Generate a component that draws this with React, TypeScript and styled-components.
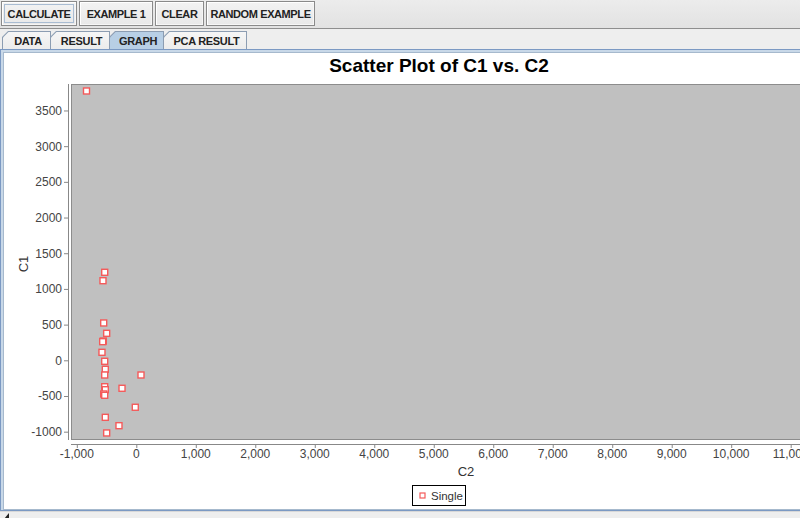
import React from 'react';
import styled, { createGlobalStyle } from 'styled-components';

const GlobalStyle = createGlobalStyle`
  html, body {
    margin: 0;
    padding: 0;
    background: #eeeeee;
    overflow: hidden;
  }
  body {
    font-family: "Liberation Sans", Arial, sans-serif;
  }
`;

const BUTTONS = [
  { label: 'CALCULATE', width: 76, focused: true },
  { label: 'EXAMPLE 1', width: 74, focused: false },
  { label: 'CLEAR', width: 49, focused: false },
  { label: 'RANDOM EXAMPLE', width: 109, focused: false },
];

const TABS = [
  { label: 'DATA', width: 49 },
  { label: 'RESULT', width: 60 },
  { label: 'GRAPH', width: 55 },
  { label: 'PCA RESULT', width: 84 },
];

const SELECTED_TAB = 'GRAPH';

// C2 (x) vs C1 (y)
const POINTS: [number, number][] = [
  [-837, 3773],
  [-531, 1233],
  [-560, 1115],
  [-548, 523],
  [-498, 378],
  [-555, 270],
  [-565, 261],
  [-577, 112],
  [-531, -14],
  [-521, -126],
  [-531, -206],
  [79, -206],
  [-531, -370],
  [-521, -412],
  [-240, -392],
  [-548, -472],
  [-531, -490],
  [-17, -658],
  [-521, -799],
  [-291, -916],
  [-498, -1018],
];

const X_TICKS = Array.from({ length: 13 }, (_, i) => -1000 + i * 1000);
const Y_TICKS = Array.from({ length: 10 }, (_, i) => -1000 + i * 500);

const sx = (v: number) => 135.3 + v * 0.05949;
const sy = (v: number) => 360.3 - v * 0.07138;

const fmt = (v: number) => v.toLocaleString('en-US');

const FONT = 'Liberation Sans, Arial, sans-serif';

function ScatterChart() {
  return (
    <ChartSvg viewBox="3 53 797 456" width={797} height={456}>
      <text x={438} y={72} textAnchor="middle" fontFamily={FONT} fontWeight={700} fontSize={19} fill="#000">
        Scatter Plot of C1 vs. C2
      </text>

      <rect x={70.5} y={84.5} width={760} height={355} fill="#c0c0c0" stroke="#8c8c8c" />

      {/* y axis */}
      <line x1={67.5} y1={84} x2={67.5} y2={440} stroke="#888" />
      {Y_TICKS.map((t) => (
        <g key={t}>
          <line x1={63} y1={sy(t) + 0.5} x2={67} y2={sy(t) + 0.5} stroke="#888" />
          <text x={61} y={sy(t) + 4.5} textAnchor="end" fontSize={12} fill="#444" fontFamily={FONT}>
            {t}
          </text>
        </g>
      ))}

      {/* x axis */}
      <line x1={70} y1={444.5} x2={810} y2={444.5} stroke="#888" />
      {X_TICKS.map((t) => (
        <g key={t}>
          <line x1={sx(t) + 0.5} y1={445} x2={sx(t) + 0.5} y2={448} stroke="#888" />
          <text x={sx(t)} y={458} textAnchor="middle" fontSize={12} fill="#444" fontFamily={FONT}>
            {fmt(t)}
          </text>
        </g>
      ))}

      <text x={465} y={476} textAnchor="middle" fontSize={13} fill="#333" fontFamily={FONT}>
        C2
      </text>
      <text
        transform="translate(26.5 264) rotate(-90)"
        textAnchor="middle"
        fontSize={13}
        fill="#333"
        fontFamily={FONT}
      >
        C1
      </text>

      {POINTS.map(([x, y], i) => (
        <rect
          key={i}
          x={sx(x) - 3}
          y={sy(y) - 3}
          width={6}
          height={6}
          fill="#fff"
          stroke="#f45a5a"
          strokeWidth={1.4}
        />
      ))}

      {/* legend */}
      <rect x={411.5} y={485.5} width={53} height={20} fill="#fff" stroke="#000" />
      <rect x={419} y={493} width={5} height={5} fill="#fff" stroke="#f45a5a" strokeWidth={1.2} />
      <text x={430} y={500} fontSize={11.5} fill="#333" fontFamily={FONT}>
        Single
      </text>
    </ChartSvg>
  );
}

export default function App() {
  return (
    <>
      <GlobalStyle />
      <Frame>
        <Toolbar>
          {BUTTONS.map((b) => (
            <ToolButton key={b.label} $w={b.width}>
              <Focus $on={b.focused}>{b.label}</Focus>
            </ToolButton>
          ))}
        </Toolbar>

        <TabStrip>
          {TABS.map((t) => (
            <Tab key={t.label} $w={t.width} $selected={t.label === SELECTED_TAB}>
              <TabFace $selected={t.label === SELECTED_TAB}>{t.label}</TabFace>
            </Tab>
          ))}
        </TabStrip>

        <Panel>
          <Content>
            <ScatterChart />
          </Content>
        </Panel>

        <BottomBar>
          <Arrow />
        </BottomBar>
      </Frame>
    </>
  );
}

const Frame = styled.div`
  width: 800px;
  height: 518px;
  display: flex;
  flex-direction: column;
  overflow: hidden;
`;

const Toolbar = styled.div`
  height: 29px;
  flex-shrink: 0;
  display: flex;
  align-items: flex-start;
  gap: 2px;
  padding: 1px 0 0 1px;
  box-sizing: border-box;
  background: linear-gradient(to bottom, #ececec, #e2e2e2);
  border-bottom: 1px solid #8e8e8e;
`;

const ToolButton = styled.button<{ $w: number }>`
  width: ${(p) => p.$w}px;
  height: 25px;
  padding: 0;
  margin: 0;
  display: flex;
  align-items: center;
  justify-content: center;
  white-space: nowrap;
  border: 1px solid #8a8a8a;
  box-shadow: inset 1px 1px 0 #ffffff, inset -1px -1px 0 #f6f6f6;
  background: linear-gradient(to bottom, #f3f3f3, #e8e8e8);
  font-family: "Liberation Sans", Arial, sans-serif;
  font-weight: 700;
  font-size: 11px;
  letter-spacing: -0.4px;
  color: #222;
`;

const Focus = styled.span<{ $on: boolean }>`
  display: flex;
  align-items: center;
  padding: 0 3px;
  height: 17px;
  white-space: nowrap;
  border: 1px solid ${(p) => (p.$on ? '#a9bcd2' : 'transparent')};
`;

const TabStrip = styled.div`
  height: 20px;
  flex-shrink: 0;
  display: flex;
  align-items: flex-end;
  padding-left: 2px;
  box-sizing: border-box;
  background: #eeeeee;
`;

const Tab = styled.div<{ $w: number; $selected: boolean }>`
  width: ${(p) => p.$w}px;
  height: 18px;
  margin-right: -1px;
  padding: 1px 1px 0 1px;
  box-sizing: border-box;
  background: #8c9db2;
  clip-path: polygon(0 6px, 6px 0, 100% 0, 100% 100%, 0 100%);
  position: relative;
  z-index: ${(p) => (p.$selected ? 1 : 0)};
`;

const TabFace = styled.div<{ $selected: boolean }>`
  height: 100%;
  display: flex;
  align-items: center;
  justify-content: center;
  padding-left: 3px;
  box-sizing: border-box;
  white-space: nowrap;
  background: ${(p) =>
    p.$selected ? '#b8cfe5' : 'linear-gradient(to bottom, #f6f6f6, #ececec)'};
  clip-path: polygon(0 5.5px, 5.5px 0, 100% 0, 100% 100%, 0 100%);
  font-family: "Liberation Sans", Arial, sans-serif;
  font-weight: 700;
  font-size: 11px;
  letter-spacing: -0.3px;
  color: #222;
`;

const Panel = styled.div`
  flex: 1;
  display: flex;
  border-top: 1px solid #7b99c3;
  border-left: 1px solid #7b99c3;
  border-bottom: 1px solid #7b99c3;
  padding: 2px 0 0 2px;
  background: #c8d8e8;
`;

const Content = styled.div`
  flex: 1;
  background: #ffffff;
  border-top: 1px solid #a6b9cd;
  border-left: 1px solid #a6b9cd;
  border-bottom: 1px solid #a6b9cd;
  overflow: hidden;
`;

const ChartSvg = styled.svg`
  display: block;
`;

const BottomBar = styled.div`
  height: 7px;
  flex-shrink: 0;
  background: #eeeeee;
  border-top: 1px solid #d8d8d8;
  position: relative;
`;

const Arrow = styled.div`
  position: absolute;
  left: 4px;
  bottom: 0;
  width: 0;
  height: 0;
  border-left: 5px solid transparent;
  border-bottom: 6px solid #222;
`;
